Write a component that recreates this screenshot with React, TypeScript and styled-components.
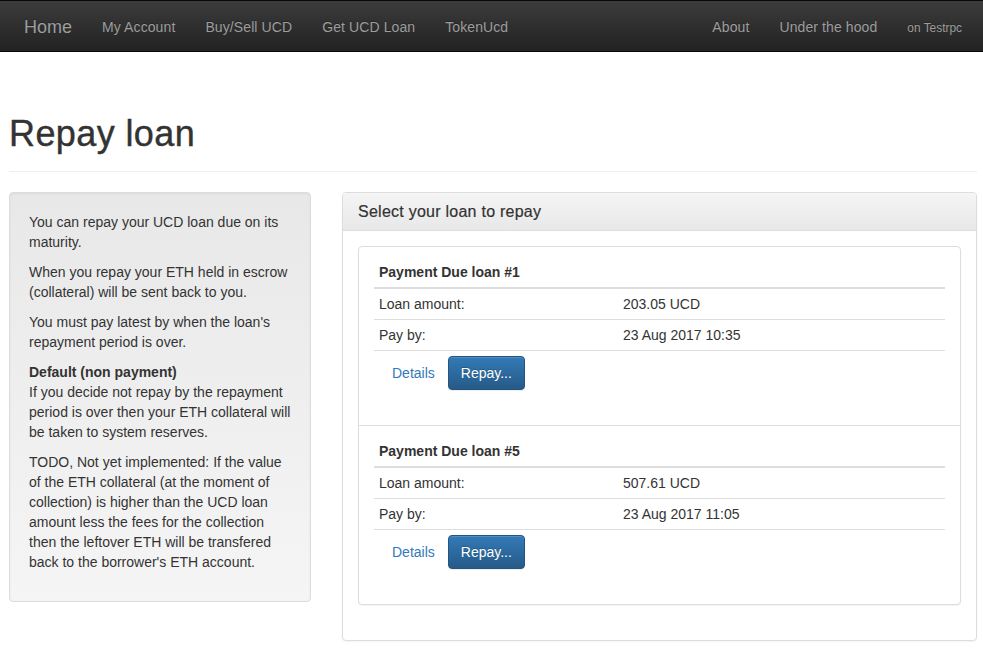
import React from "react";
import styled, { createGlobalStyle } from "styled-components";

const GlobalStyle = createGlobalStyle`
  *, *::before, *::after { box-sizing: border-box; }
  html, body { margin: 0; padding: 0; }
  body {
    font-family: "Liberation Sans", Helvetica, Arial, sans-serif;
    font-size: 14px;
    line-height: 20px;
    color: #333;
    background: #fff;
  }
`;

const Navbar = styled.nav`
  display: flex;
  align-items: stretch;
  height: 52px;
  padding: 0 6px 0 9px;
  border-top: 1px solid #080808;
  border-bottom: 1px solid #080808;
  background: linear-gradient(to bottom, #3c3c3c 0%, #222 100%);
`;

const NavGroup = styled.div<{ $right?: boolean }>`
  display: flex;
  margin-left: ${(p) => (p.$right ? "auto" : "0")};
`;

const Brand = styled.a`
  display: block;
  padding: 16px 15px 14px;
  font-size: 18px;
  line-height: 20px;
  color: #9d9d9d;
  text-decoration: none;
  text-shadow: 0 -1px 0 rgba(0, 0, 0, 0.25);
`;

const NavLink = styled.a`
  display: block;
  padding: 16px 15px 14px;
  font-size: 14px;
  line-height: 20px;
  letter-spacing: 0.1px;
  color: #9d9d9d;
  text-decoration: none;
  text-shadow: 0 -1px 0 rgba(0, 0, 0, 0.25);
`;

const Small = styled.small`
  font-size: 85%;
  letter-spacing: 0;
`;

const Main = styled.main`
  padding: 0 6px 0 9px;
`;

const PageHeader = styled.div`
  margin: 62px 0 20px;
  padding-bottom: 17px;
  border-bottom: 1px solid #eee;
`;

const Title = styled.h1`
  margin: 0;
  font-size: 36px;
  font-weight: 500;
  line-height: 40px;
  letter-spacing: 0.4px;
  color: #333;
  -webkit-text-stroke: 0.4px #333;
`;

const Row = styled.div`
  display: grid;
  grid-template-columns: 302px 635px;
  column-gap: 31px;
  align-items: start;
`;

const Well = styled.div`
  padding: 19px;
  margin-bottom: 20px;
  border: 1px solid #dcdcdc;
  border-radius: 4px;
  background: linear-gradient(to bottom, #e8e8e8 0%, #f5f5f5 100%);
  box-shadow: inset 0 1px 3px rgba(0, 0, 0, 0.05), 0 1px 0 rgba(255, 255, 255, 0.1);
`;

const Para = styled.p`
  margin: 0 0 10px;
`;

const Panel = styled.section`
  margin-bottom: 20px;
  border: 1px solid #ddd;
  border-radius: 4px;
  background: #fff;
  box-shadow: 0 1px 2px rgba(0, 0, 0, 0.05);
`;

const PanelHeading = styled.div`
  padding: 10px 15px;
  border-bottom: 1px solid #ddd;
  border-radius: 3px 3px 0 0;
  background: linear-gradient(to bottom, #f5f5f5 0%, #e8e8e8 100%);
`;

const PanelTitle = styled.h3`
  margin: 0;
  padding-top: 1px;
  font-size: 16px;
  font-weight: 500;
  line-height: 16px;
  letter-spacing: 0.25px;
  color: #333;
  -webkit-text-stroke: 0.2px #333;
`;

const PanelBody = styled.div`
  padding: 15px;
`;

const LoanList = styled.div`
  margin-bottom: 20px;
  border: 1px solid #ddd;
  border-radius: 4px;
  background: #fff;
  box-shadow: 0 1px 1px rgba(0, 0, 0, 0.05);
`;

const LoanItem = styled.div`
  padding: 10px 15px;
  & + & {
    border-top: 1px solid #ddd;
  }
`;

const Table = styled.table`
  width: 100%;
  table-layout: fixed;
  border-collapse: collapse;
  border-spacing: 0;
  margin-bottom: 20px;
`;

const LabelCol = styled.col`
  width: 244px;
`;

const HeadCell = styled.th`
  padding: 5px;
  text-align: left;
  font-weight: bold;
  line-height: 20px;
  border-bottom: 2px solid #ddd;
`;

const Cell = styled.td`
  padding: 5px;
  line-height: 20px;
  vertical-align: top;
  border-top: 1px solid #ddd;
`;

const Actions = styled.div`
  display: flex;
  align-items: center;
`;

const Button = styled.button<{ $primary?: boolean }>`
  display: inline-block;
  height: 34px;
  padding: 6px 12px;
  font-family: inherit;
  font-size: 14px;
  line-height: 20px;
  border-radius: 4px;
  border: 1px solid ${(p) => (p.$primary ? "#245580" : "transparent")};
  color: ${(p) => (p.$primary ? "#fff" : "#337ab7")};
  background: ${(p) =>
    p.$primary ? "linear-gradient(to bottom, #337ab7 0%, #265a88 100%)" : "transparent"};
  text-shadow: ${(p) => (p.$primary ? "0 -1px 0 rgba(0, 0, 0, 0.2)" : "none")};
  box-shadow: ${(p) =>
    p.$primary ? "inset 0 1px 0 rgba(255, 255, 255, 0.15), 0 1px 1px rgba(0, 0, 0, 0.075)" : "none"};
  cursor: pointer;
`;

type Loan = { id: number; amount: string; payBy: string };

const loans: Loan[] = [
  { id: 1, amount: "203.05 UCD", payBy: "23 Aug 2017 10:35" },
  { id: 5, amount: "507.61 UCD", payBy: "23 Aug 2017 11:05" },
];

function LoanCard({ loan }: { loan: Loan }) {
  return (
    <LoanItem>
      <Table>
        <colgroup>
          <LabelCol />
          <col />
        </colgroup>
        <thead>
          <tr>
            <HeadCell colSpan={2}>Payment Due loan #{loan.id}</HeadCell>
          </tr>
        </thead>
        <tbody>
          <tr>
            <Cell>Loan amount:</Cell>
            <Cell>{loan.amount}</Cell>
          </tr>
          <tr>
            <Cell>Pay by:</Cell>
            <Cell>{loan.payBy}</Cell>
          </tr>
          <tr>
            <Cell colSpan={2}>
              <Actions>
                <Button type="button">Details</Button>
                <Button type="button" $primary>
                  Repay...
                </Button>
              </Actions>
            </Cell>
          </tr>
        </tbody>
      </Table>
    </LoanItem>
  );
}

export default function App() {
  return (
    <>
      <GlobalStyle />
      <Navbar>
        <NavGroup>
          <Brand href="#">Home</Brand>
          <NavLink href="#">My Account</NavLink>
          <NavLink href="#">Buy/Sell UCD</NavLink>
          <NavLink href="#">Get UCD Loan</NavLink>
          <NavLink href="#">TokenUcd</NavLink>
        </NavGroup>
        <NavGroup $right>
          <NavLink href="#">About</NavLink>
          <NavLink href="#">Under the hood</NavLink>
          <NavLink href="#">
            <Small>on Testrpc</Small>
          </NavLink>
        </NavGroup>
      </Navbar>
      <Main>
        <PageHeader>
          <Title>Repay loan</Title>
        </PageHeader>
        <Row>
          <Well>
            <Para>You can repay your UCD loan due on its maturity.</Para>
            <Para>When you repay your ETH held in escrow (collateral) will be sent back to you.</Para>
            <Para>You must pay latest by when the loan's repayment period is over.</Para>
            <Para>
              <b>Default (non payment)</b>
              <br />
              If you decide not repay by the repayment period is over then your ETH collateral will
              be taken to system reserves.
            </Para>
            <Para>
              TODO, Not yet implemented: If the value of the ETH collateral (at the moment of
              collection) is higher than the UCD loan amount less the fees for the collection then
              the leftover ETH will be transfered back to the borrower's ETH account.
            </Para>
          </Well>
          <Panel>
            <PanelHeading>
              <PanelTitle>Select your loan to repay</PanelTitle>
            </PanelHeading>
            <PanelBody>
              <LoanList>
                {loans.map((l) => (
                  <LoanCard key={l.id} loan={l} />
                ))}
              </LoanList>
            </PanelBody>
          </Panel>
        </Row>
      </Main>
    </>
  );
}
